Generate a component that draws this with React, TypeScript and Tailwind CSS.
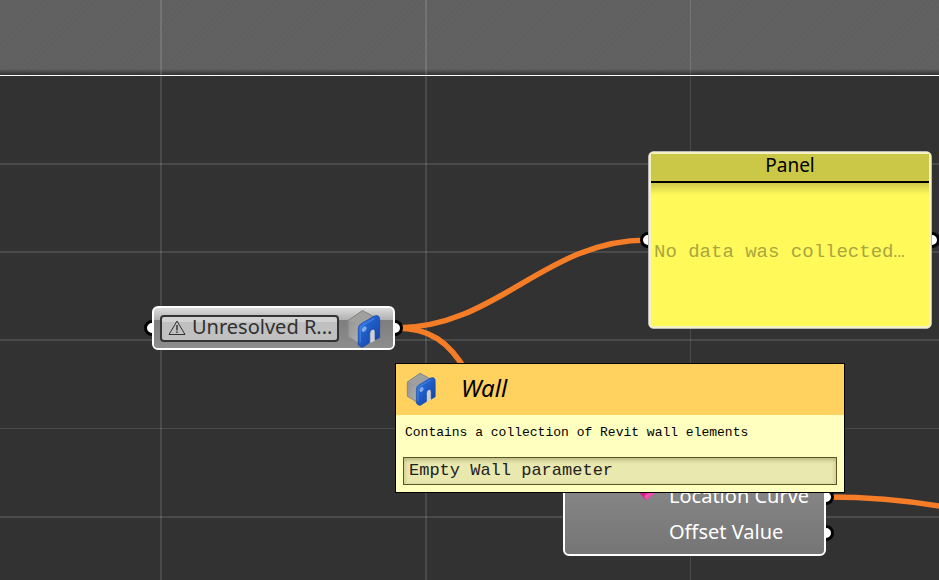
import { clsx } from "clsx";

const COLUMNS = [
  { x: 160, w: 2 },
  { x: 425, w: 2 },
  { x: 690, w: 1 },
];
const ROWS = [
  { y: 163, h: 2 },
  { y: 251, h: 2 },
  { y: 339, h: 2 },
  { y: 428, h: 1 },
  { y: 516, h: 2 },
];

const OUTPUTS = ["Location Line", "Location Curve", "Offset Value"];

function Grid() {
  return (
    <svg className="absolute inset-0 h-full w-full" aria-hidden="true">
      <g fill="#fff" fillOpacity="0.12">
        {COLUMNS.map((c) => (
          <rect key={c.x} x={c.x} y="0" width={c.w} height="100%" />
        ))}
        {ROWS.map((r) => (
          <rect key={r.y} x="0" y={r.y} width="100%" height={r.h} />
        ))}
      </g>
    </svg>
  );
}

function Wires() {
  return (
    <svg className="absolute inset-0 h-full w-full" aria-hidden="true">
      <g fill="none" stroke="#f67d28" strokeWidth="5.5">
        <path d="M396 328 C497 328 545 240 647 240" />
        <path d="M396 328 C430 328 449 342 466 371" />
        <path d="M828 497 C870 497 905 500 945 507" />
      </g>
    </svg>
  );
}

function WallIcon({ id, className }: { id: string; className?: string }) {
  return (
    <svg viewBox="30 26 110 124" className={className} aria-hidden="true">
      <defs>
        <linearGradient id={`${id}-side`} x1="0" y1="0" x2="1" y2="0.6">
          <stop offset="0" stopColor="#939393" />
          <stop offset="1" stopColor="#b0b0af" />
        </linearGradient>
        <linearGradient id={`${id}-blue`} x1="0" y1="0" x2="0.9" y2="1">
          <stop offset="0" stopColor="#4d8bea" />
          <stop offset="0.35" stopColor="#2263cf" />
          <stop offset="1" stopColor="#133f9f" />
        </linearGradient>
      </defs>
      <path d="M82 33 L126 57 V112 L82 139 L38 113 V63 Z" fill="#8b8b8b" />
      <path d="M38 63 L82 33 L126 57 L80 86 Z" fill="#a0a09f" />
      <path d="M38 63 L80 86 V138 L38 113 Z" fill={`url(#${id}-side)`} />
      <path d="M38 64 L82 34 L120 55 M38 64 V113 L74 135" fill="none" stroke="#858687" strokeWidth="3" />
      <path d="M98 96 L121 84 V124 L98 136 Z" fill="#d0d0d1" />
      <path
        d="M69 90 Q69 79 77 74 L116 51 Q132 44 134 59 V115 L120 123 V98 Q119 87 111 91 Q104 94 104 102 V131 L82 145 Q73 144 69 137 Z"
        fill={`url(#${id}-blue)`}
        stroke="#1648a8"
        strokeWidth="2"
      />
      <path d="M75 128 V92 Q76 82 84 77 L116 58" fill="none" stroke="#3f7ee0" strokeWidth="4" strokeLinecap="round" />
      <ellipse cx="87" cy="90" rx="6" ry="9" fill="#a9cbff" fillOpacity="0.7" transform="rotate(35 87 90)" />
    </svg>
  );
}

// Connection grip, half hidden behind the node it belongs to
function Grip({ className }: { className?: string }) {
  return <span className={clsx("size-4 shrink-0 rounded-full border-3 border-black bg-white", className)} />;
}

function WallParameter() {
  return (
    <div className="absolute left-[144px] top-[306px] flex items-center">
      <Grip />
      <div className="z-10 -mx-2 rounded-md border-2 border-white bg-linear-to-b from-[#dcdcdc] via-[#b0b0b0] via-30% to-[#b0b0b0]">
        <div className="flex h-10 items-center gap-[6px] rounded-b bg-linear-to-b from-transparent from-30% via-[#7e7e7e] via-30% to-[#8e8e8e] pl-[6px] pr-[11px]">
          <div className="flex h-[27px] w-[179px] items-center gap-[6px] rounded border-2 border-[#333] bg-linear-to-b from-[#d2d2d2] from-20% to-[#c0c0c0] to-20% pl-[6px] text-[#303030]">
            <svg viewBox="0 0 18 16" className="h-4 w-[18px]" fill="none" stroke="currentColor" aria-hidden="true">
              <path d="M9 1 L17 14.5 H1 Z" />
              <path d="M9 5 V10.5 M9 11.5 V13" strokeWidth="1.4" />
            </svg>
            <span className="whitespace-nowrap pb-[2px] text-[20px] leading-5">Unresolved R...</span>
          </div>
          <WallIcon id="node" className="h-[41px] w-[37px]" />
        </div>
      </div>
      <Grip />
    </div>
  );
}

function Panel() {
  return (
    <section className="absolute left-[640px] top-[151px] flex items-center">
      <Grip />
      <div className="z-10 -mx-2 w-[284px] rounded-md border border-[#b9b9b9] bg-[#fffa5a]">
        <div className="rounded border-2 border-[#f3f0c4] pb-[62px]">
          <h2 className="border-b-2 border-black bg-[#cbc848] pb-[5px] text-center text-[19px] leading-[22px]">Panel</h2>
          <div className="h-3 bg-linear-to-b from-[#cfc84a] to-[#fffa5a]" />
          <p className="whitespace-nowrap pl-[3px] pt-[45px] font-['Liberation_Mono',monospace] text-[19px] leading-6 text-[#a9a53f]">
            No data was collected…
          </p>
        </div>
      </div>
      <Grip />
    </section>
  );
}

function GeometryComponent() {
  return (
    <div className="absolute left-[563px] top-[440px] flex">
      <div className="z-10 flex w-[263px] gap-2 rounded-md border-2 border-white bg-linear-to-b from-[#929292] to-[#757575] pb-1 pl-[66px]">
        <svg viewBox="0 0 30 30" className="mt-[30px] size-[30px]" aria-hidden="true">
          <path d="M2 14 L14 6 L28 18 L15 28 Z" fill="#d81b8c" />
          <path d="M15 28 L28 18 L26 14 L13 24 Z" fill="#f04fae" />
        </svg>
        <ul className="text-[20px] leading-9 text-white">
          {OUTPUTS.map((name) => (
            <li key={name} className="whitespace-nowrap">
              {name}
            </li>
          ))}
        </ul>
      </div>
      <div className="-ml-2 flex flex-col justify-end gap-5 pb-[15px]">
        {OUTPUTS.map((name) => (
          <Grip key={name} />
        ))}
      </div>
    </div>
  );
}

function WallTooltip() {
  return (
    <div
      role="tooltip"
      className="absolute left-[395px] top-[363px] z-20 w-[450px] border border-black bg-[#ffffbf] pb-[7px] text-black"
    >
      <header className="flex items-center gap-6 bg-[#ffd15f] pb-2 pl-[9px] pt-[7px]">
        <WallIcon id="tip" className="h-9 w-8" />
        <h3 className="pb-[2px] text-2xl italic leading-8">Wall</h3>
      </header>
      <p className="whitespace-nowrap pl-[9px] pt-2 font-['Liberation_Mono',monospace] text-[13px] leading-5">
        Contains a collection of Revit wall elements
      </p>
      <p className="mx-[7px] mt-[14px] border border-[#5a5522] bg-[#e9e8ae] pl-[5px] font-['Liberation_Mono',monospace] text-[17px] leading-[26px] text-[#222] shadow-[inset_0_2px_4px_rgba(90,85,34,0.35)]">
        Empty Wall parameter
      </p>
    </div>
  );
}

export default function App() {
  return (
    <main className="relative h-screen w-full overflow-hidden bg-[#323232] font-['Noto_Sans',sans-serif]">
      <header className="border-b border-white bg-[repeating-linear-gradient(135deg,#5f5f5f_0px,#626262_2px,#5f5f5f_4px)]">
        <div className="h-[75px] bg-linear-to-b from-transparent from-92% to-[#323232]" />
      </header>
      <Grid />
      <Wires />
      <WallParameter />
      <Panel />
      <GeometryComponent />
      <WallTooltip />
    </main>
  );
}
